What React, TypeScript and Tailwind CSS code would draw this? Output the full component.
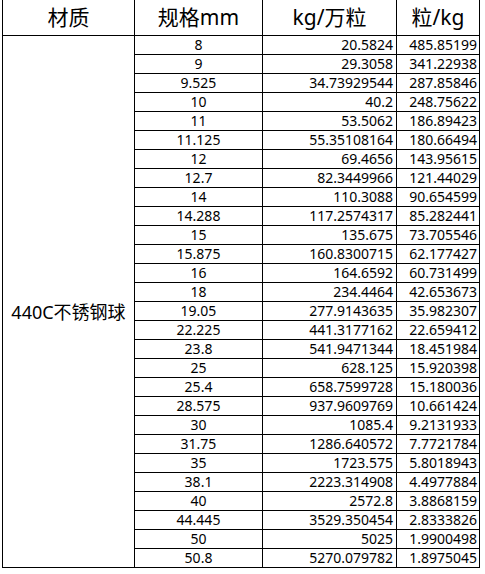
const rows: [string, string, string][] = [
  ["8", "20.5824", "485.85199"],
  ["9", "29.3058", "341.22938"],
  ["9.525", "34.73929544", "287.85846"],
  ["10", "40.2", "248.75622"],
  ["11", "53.5062", "186.89423"],
  ["11.125", "55.35108164", "180.66494"],
  ["12", "69.4656", "143.95615"],
  ["12.7", "82.3449966", "121.44029"],
  ["14", "110.3088", "90.654599"],
  ["14.288", "117.2574317", "85.282441"],
  ["15", "135.675", "73.705546"],
  ["15.875", "160.8300715", "62.177427"],
  ["16", "164.6592", "60.731499"],
  ["18", "234.4464", "42.653673"],
  ["19.05", "277.9143635", "35.982307"],
  ["22.225", "441.3177162", "22.659412"],
  ["23.8", "541.9471344", "18.451984"],
  ["25", "628.125", "15.920398"],
  ["25.4", "658.7599728", "15.180036"],
  ["28.575", "937.9609769", "10.661424"],
  ["30", "1085.4", "9.2131933"],
  ["31.75", "1286.640572", "7.7721784"],
  ["35", "1723.575", "5.8018943"],
  ["38.1", "2223.314908", "4.4977884"],
  ["40", "2572.8", "3.8868159"],
  ["44.445", "3529.350454", "2.8333826"],
  ["50", "5025", "1.9900498"],
  ["50.8", "5270.079782", "1.8975045"],
];

const font = "font-['Noto_Sans','Noto_Sans_CJK_SC',sans-serif]";

export default function App() {
  return (
    <div className={`min-h-[574px] w-[485px] bg-white text-black ${font}`}>
      <div className="ml-[2px] w-[478px] border-l border-black">
        {/* header */}
        <div className="flex h-[36px] border-b border-black text-[21px]">
          <div className="flex w-[132px] items-center justify-center border-r border-black">材质</div>
          <div className="flex w-[128px] items-center justify-center border-r border-black">规格mm</div>
          <div className="flex w-[134px] items-center justify-center border-r border-black">kg/万粒</div>
          <div className="flex w-[83px] items-center justify-center border-r border-black">粒/kg</div>
        </div>

        <div className="flex">
          <div className="flex w-[132px] items-center justify-center border-r border-b border-black pt-[21px] text-[18px]">
            440C不锈钢球
          </div>
          <div className="flex flex-col text-[14px] leading-none">
            {rows.map(([size, perWan, perKg]) => (
              <div key={size} className="flex h-[19px] border-b border-black">
                <div className="flex w-[128px] items-center justify-center border-r border-black">{size}</div>
                <div className="flex w-[134px] items-center justify-end border-r border-black pr-[3px]">{perWan}</div>
                <div className="flex w-[83px] items-center justify-end border-r border-black pr-[2px]">{perKg}</div>
              </div>
            ))}
          </div>
        </div>
      </div>
    </div>
  );
}
